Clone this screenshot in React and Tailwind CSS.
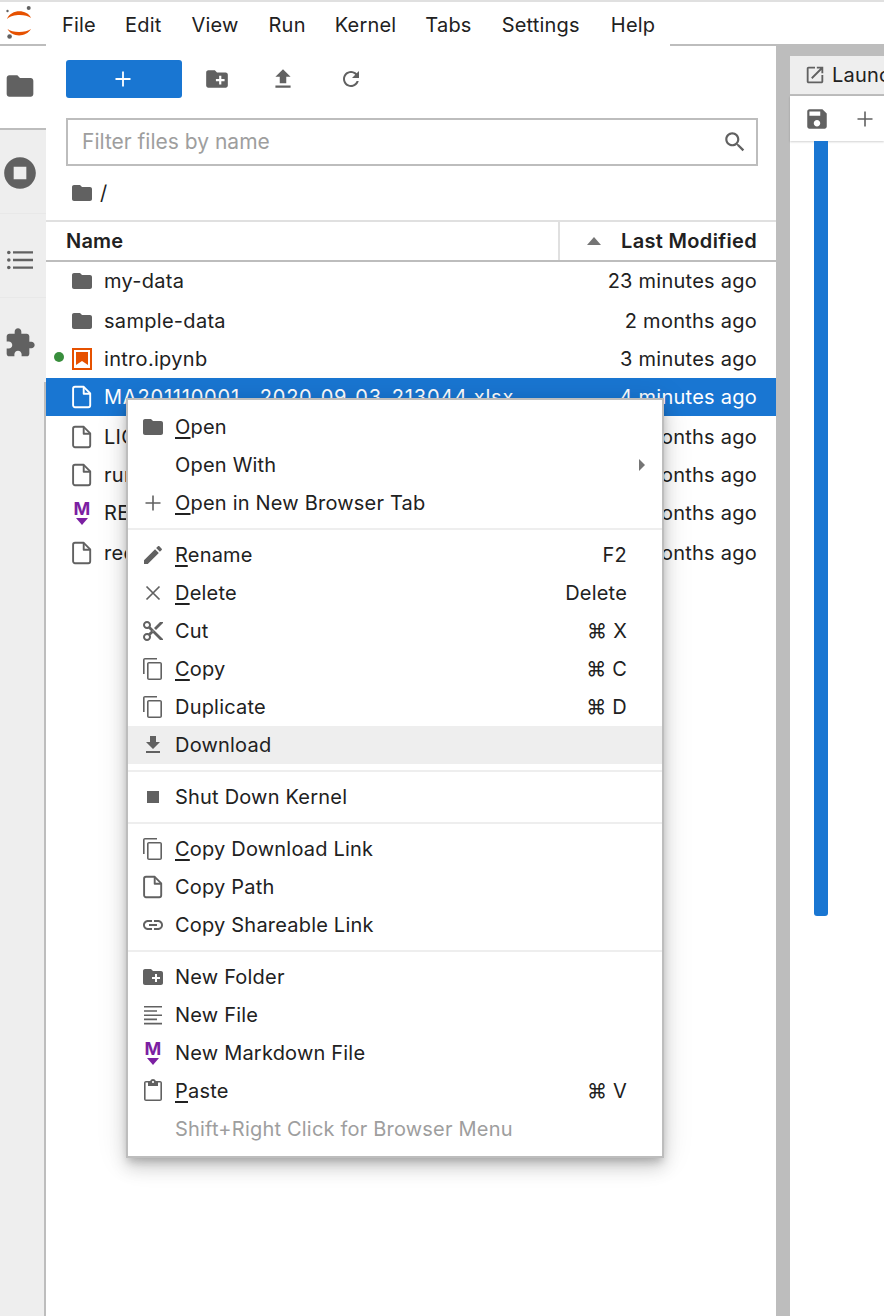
import React from "react";

const P = {
  folder: "M10 4H4c-1.1 0-1.99.9-1.99 2L2 18c0 1.1.9 2 2 2h16c1.1 0 2-.9 2-2V8c0-1.1-.9-2-2-2h-8l-2-2z",
  newFolder: "M20 6h-8l-2-2H4c-1.11 0-1.99.89-1.99 2L2 18c0 1.11.89 2 2 2h16c1.11 0 2-.89 2-2V8c0-1.11-.89-2-2-2zm-1 8h-3v3h-2v-3h-3v-2h3V9h2v3h3v2z",
  upload: "M9 16h6v-6h4l-7-7-7 7h4zm-4 2h14v2H5z",
  refresh: "M17.65 6.35C16.2 4.9 14.21 4 12 4c-4.42 0-7.99 3.58-7.99 8s3.57 8 7.99 8c3.73 0 6.84-2.55 7.73-6h-2.08c-.82 2.33-3.04 4-5.65 4-3.31 0-6-2.69-6-6s2.69-6 6-6c1.66 0 3.14.69 4.22 1.78L13 11h7V4l-2.35 2.35z",
  search: "M15.5 14h-.79l-.28-.27C15.41 12.59 16 11.11 16 9.5 16 5.91 13.09 3 9.5 3S3 5.91 3 9.5 5.91 16 9.5 16c1.61 0 3.09-.59 4.23-1.57l.27.28v.79l5 4.99L20.49 19l-4.99-5zm-6 0C7.01 14 5 11.99 5 9.5S7.01 5 9.5 5 14 7.01 14 9.5 11.99 14 9.5 14z",
  stop: "M12 2C6.48 2 2 6.48 2 12s4.48 10 10 10 10-4.48 10-10S17.52 2 12 2zm4 14H8V8h8v8z",
  ext: "M20.5 11H19V7c0-1.1-.9-2-2-2h-4V3.5C13 2.12 11.88 1 10.5 1S8 2.12 8 3.5V5H4c-1.1 0-1.99.9-1.99 2v3.8H3.5c1.49 0 2.7 1.21 2.7 2.7s-1.21 2.7-2.7 2.7H2V20c0 1.1.9 2 2 2h3.8v-1.5c0-1.49 1.21-2.7 2.7-2.7 1.49 0 2.7 1.21 2.7 2.7V22H17c1.1 0 2-.9 2-2v-4h1.5c1.38 0 2.5-1.12 2.5-2.5S21.88 11 20.5 11z",
  pencil: "M3 17.25V21h3.75L17.81 9.94l-3.75-3.75L3 17.25zM20.71 7.04c.39-.39.39-1.02 0-1.41l-2.34-2.34c-.39-.39-1.02-.39-1.41 0l-1.83 1.83 3.75 3.75 1.83-1.83z",
  cut: "M9.64 7.64c.23-.5.36-1.05.36-1.64 0-2.21-1.79-4-4-4S2 3.79 2 6s1.79 4 4 4c.59 0 1.14-.13 1.64-.36L10 12l-2.36 2.36C7.14 14.13 6.59 14 6 14c-2.21 0-4 1.79-4 4s1.79 4 4 4 4-1.79 4-4c0-.59-.13-1.14-.36-1.64L12 14l7 7h3v-1L9.64 7.64zM6 8c-1.1 0-2-.89-2-2s.9-2 2-2 2 .89 2 2-.9 2-2 2zm0 12c-1.1 0-2-.89-2-2s.9-2 2-2 2 .89 2 2-.9 2-2 2zm6-7.5c-.28 0-.5-.22-.5-.5s.22-.5.5-.5.5.22.5.5-.22.5-.5.5zM19 3l-6 6 2 2 7-7V3z",
  copy: "M16 1H4c-1.1 0-2 .9-2 2v14h1.6V2.6H16V1zm3 4H8c-1.1 0-2 .9-2 2v14c0 1.1.9 2 2 2h11c1.1 0 2-.9 2-2V7c0-1.1-.9-2-2-2zm.4 16.4H7.6V6.6h11.8v14.8z",
  download: "M19 9h-4V3H9v6H5l7 7 7-7zM5 18v2h14v-2H5z",
  link: "M3.9 12c0-1.71 1.39-3.1 3.1-3.1h4V7H7c-2.76 0-5 2.24-5 5s2.24 5 5 5h4v-1.9H7c-1.71 0-3.1-1.39-3.1-3.1zM8 13h8v-2H8v2zm9-6h-4v1.9h4c1.71 0 3.1 1.39 3.1 3.1s-1.39 3.1-3.1 3.1h-4V17h4c2.76 0 5-2.24 5-5s-2.24-5-5-5z",
  paste: "M19 2h-4.18C14.4.84 13.3 0 12 0c-1.3 0-2.4.84-2.82 2H5c-1.1 0-2 .9-2 2v16c0 1.1.9 2 2 2h14c1.1 0 2-.9 2-2V4c0-1.1-.9-2-2-2zm-7 0c.55 0 1 .45 1 1s-.45 1-1 1-1-.45-1-1 .45-1 1-1zm7.4 18.4H4.6V3.6H7V7h10V3.6h2.4v16.8z",
  save: "M17 3H5c-1.11 0-2 .9-2 2v14c0 1.1.89 2 2 2h14c1.1 0 2-.9 2-2V7l-4-4zm-5 16c-1.66 0-3-1.34-3-3s1.34-3 3-3 3 1.34 3 3-1.34 3-3 3zm3-10H5V5h10v4z",
  launch: "M19 19H5V5h7V3H5c-1.11 0-2 .9-2 2v14c0 1.1.89 2 2 2h14c1.1 0 2-.9 2-2v-7h-2v7zM14 3v2h3.59l-9.83 9.83 1.41 1.41L19 6.41V10h2V3h-7z",
};

function Fill({ d, size = 24, cls = "text-[#616161]" }) {
  return (
    <svg viewBox="0 0 24 24" width={size} height={size} className={`block shrink-0 ${cls}`} fill="currentColor">
      <path d={d} />
    </svg>
  );
}

function PlusIcon({ size = 24, w = 1.6, cls = "text-[#616161]" }) {
  return (
    <svg viewBox="0 0 24 24" width={size} height={size} className={`block shrink-0 ${cls}`} fill="none" stroke="currentColor" strokeWidth={w}>
      <path d="M12 4.5v15M4.5 12h15" />
    </svg>
  );
}

function XIcon() {
  return (
    <svg viewBox="0 0 24 24" width="24" height="24" className="block shrink-0 text-[#616161]" fill="none" stroke="currentColor" strokeWidth="1.7">
      <path d="M5.5 5.5l13 13M18.5 5.5l-13 13" />
    </svg>
  );
}

function FileIcon({ cls = "text-[#616161]" }) {
  return (
    <svg viewBox="0 0 24 24" width="24" height="24" className={`block shrink-0 ${cls}`} fill="none" stroke="currentColor" strokeWidth="1.9" strokeLinejoin="round">
      <path d="M5 1.8h8.7l6.5 6.6v11.9a1.9 1.9 0 0 1-1.9 1.9H5a1.9 1.9 0 0 1-1.9-1.9V3.7A1.9 1.9 0 0 1 5 1.8z" />
      <path d="M13.7 1.8v6.9h6.5" />
    </svg>
  );
}

function LinesIcon() {
  return (
    <svg viewBox="0 0 24 24" width="24" height="24" className="block shrink-0 text-[#616161]" fill="currentColor">
      <path d="M3 3h18v1.6H3zM3 7.2h13v1.6H3zM3 11.4h18V13H3zM3 15.6h13v1.6H3zM3 19.8h18v1.6H3z" />
    </svg>
  );
}

function ListIcon() {
  return (
    <svg viewBox="0 0 26 20" width="26" height="20" className="block shrink-0 text-[#616161]" fill="currentColor">
      <circle cx="1.8" cy="2.5" r="1.8" />
      <circle cx="1.8" cy="10" r="1.8" />
      <circle cx="1.8" cy="17.5" r="1.8" />
      <path d="M6 1.2h20v2.4H6zM6 8.8h20v2.4H6zM6 16.4h20v2.4H6z" />
    </svg>
  );
}

function MdIcon() {
  return (
    <svg viewBox="0 0 24 24" width="24" height="24" className="block shrink-0 text-[#7b1fa2]" fill="currentColor">
      <text x="12" y="14" textAnchor="middle" fontSize="18" fontWeight="700" style={{ fontFamily: "Inter, sans-serif", letterSpacing: 0 }}>M</text>
      <path d="M6 17h12l-6 7z" />
    </svg>
  );
}

function StopSq() {
  return (
    <svg viewBox="0 0 24 24" width="24" height="24" className="block shrink-0 text-[#616161]" fill="currentColor">
      <rect x="6" y="6" width="12" height="12" />
    </svg>
  );
}

function NotebookIcon() {
  return (
    <svg viewBox="0 0 20 22" width="20" height="22" className="block shrink-0">
      <rect x="1" y="1" width="18" height="20" fill="#fff" stroke="#e65100" strokeWidth="2" />
      <path d="M4 4h12v13l-6-4-6 4z" fill="#e65100" />
    </svg>
  );
}

function Logo() {
  return (
    <svg viewBox="0 0 38 42" width="38" height="42" className="block">
      <path d="M7 17C11 7 27 7 31 16 26 12 12 12 7 17z" fill="#e65100" />
      <path d="M7.5 27C12 35.5 26 35.5 31 27 26 31 12 31 7.5 27z" fill="#e65100" />
      <circle cx="28.7" cy="6" r="2" fill="#616161" />
      <circle cx="7.5" cy="9" r="1.2" fill="#616161" />
      <circle cx="9.6" cy="34.5" r="2.3" fill="#616161" />
    </svg>
  );
}

const menus = [
  { t: "File" },
  { t: "Edit", c: "ml-[-1px]" },
  { t: "View" },
  { t: "Run" },
  { t: "Kernel", c: "ml-[-1px]" },
  { t: "Tabs", c: "ml-[-1px]" },
  { t: "Settings" },
  { t: "Help", c: "ml-[1px]" },
];

const files = [
  { name: "my-data", time: "23 minutes ago", icon: <Fill d={P.folder} /> },
  { name: "sample-data", time: "2 months ago", icon: <Fill d={P.folder} />, cls: "mt-[2px]" },
  { name: "intro.ipynb", time: "3 minutes ago", icon: <NotebookIcon />, running: true },
  { name: "MA201110001__2020_09_03_213044.xlsx", time: "4 minutes ago", icon: <FileIcon cls="text-white" />, selected: true, nameCls: "tracking-[0.8px]" },
  { name: "LICENSE", time: "2 months ago", icon: <FileIcon />, cls: "mt-[2px]" },
  { name: "runtime.txt", time: "2 months ago", icon: <FileIcon /> },
  { name: "README.md", time: "2 months ago", icon: <MdIcon /> },
  { name: "requirements.txt", time: "2 months ago", icon: <FileIcon />, cls: "mt-[2px]" },
];

const U = ({ children }) => <u className="underline decoration-2 underline-offset-[3px]">{children}</u>;

const groups = [
  [
    { icon: <Fill d={P.folder} />, label: <><U>O</U>pen</> },
    { label: "Open With", sub: true },
    { icon: <PlusIcon />, label: <><U>O</U>pen in New Browser Tab</> },
  ],
  [
    { icon: <Fill d={P.pencil} />, label: <><U>R</U>ename</>, key: "F2" },
    { icon: <XIcon />, label: <><U>D</U>elete</>, key: "Delete" },
    { icon: <Fill d={P.cut} />, label: "Cut", key: "⌘ X" },
    { icon: <Fill d={P.copy} />, label: <><U>C</U>opy</>, key: "⌘ C" },
    { icon: <Fill d={P.copy} />, label: "Duplicate", key: "⌘ D" },
    { icon: <Fill d={P.download} />, label: "Download", active: true },
  ],
  [{ icon: <StopSq />, label: "Shut Down Kernel" }],
  [
    { icon: <Fill d={P.copy} />, label: <><U>C</U>opy Download Link</> },
    { icon: <FileIcon />, label: "Copy Path" },
    { icon: <Fill d={P.link} />, label: "Copy Shareable Link" },
  ],
  [
    { icon: <Fill d={P.newFolder} />, label: "New Folder" },
    { icon: <LinesIcon />, label: "New File" },
    { icon: <MdIcon />, label: "New Markdown File" },
    { icon: <Fill d={P.paste} />, label: <><U>P</U>aste</>, key: "⌘ V" },
    { label: "Shift+Right Click for Browser Menu", disabled: true },
  ],
];

function MenuRow({ item }) {
  return (
    <div className={`flex h-[38px] items-center ${item.active ? "bg-[#eeeeee]" : ""} ${item.disabled ? "text-[#9e9e9e]" : "text-[#212121]"}`}>
      <div className="flex w-[47px] justify-center pl-[2px]">{item.icon}</div>
      <div className="flex-1">{item.label}</div>
      {item.key && <div className="pr-[35px]">{item.key}</div>}
      {item.sub && (
        <svg viewBox="0 0 6 12" width="6" height="12" className="mr-[17px] block text-[#757575]" fill="currentColor">
          <path d="M0 0l6 6-6 6z" />
        </svg>
      )}
    </div>
  );
}

function SideTab({ children, cls = "" }) {
  return <div className={`flex h-[84px] items-center justify-center pr-[6px] ${cls}`}>{children}</div>;
}

export default function App() {
  return (
    <div className="relative flex h-[1316px] w-[884px] flex-col overflow-hidden bg-white text-[20px] leading-[28px] tracking-[0.2px] text-[#212121] [font-family:Inter,'Liberation_Sans',sans-serif]">
      <div className="h-[2px] bg-[#e0e0e0]" />

      <div className="flex h-[44px]">
        <div className="w-[46px] border-b-2 border-[#bdbdbd]">
          <Logo />
        </div>
        <div className="flex w-[624px] items-center gap-[30px] pt-[2px] pl-[16px]">
          {menus.map((m) => (
            <span key={m.t} className={m.c || ""}>{m.t}</span>
          ))}
        </div>
        <div className="flex-1 border-b-2 border-[#bdbdbd]" />
      </div>

      <div className="flex min-h-0 flex-1">
        <div className="flex w-[46px] flex-col bg-[#eeeeee]">
          <SideTab cls="border-b-2 border-[#bdbdbd] bg-white pb-[2px]">
            <Fill d={P.folder} size={32} />
          </SideTab>
          <SideTab cls="border-b border-[#e8e8e8] pt-[2px]">
            <Fill d={P.stop} size={38} />
          </SideTab>
          <SideTab cls="border-b border-[#e8e8e8] pt-[8px]">
            <ListIcon />
          </SideTab>
          <SideTab cls="pt-[6px]">
            <Fill d={P.ext} size={32} />
          </SideTab>
          <div className="flex-1 border-r-2 border-[#bdbdbd]" />
        </div>

        <div className="flex w-[730px] flex-col">
          <div className="flex h-[72px] items-center pl-[20px] pb-[6px]">
            <div className="flex h-[38px] w-[116px] items-center justify-center rounded-[3px] bg-[#1976d2] pr-[2px]">
              <PlusIcon cls="text-white" w={1.8} />
            </div>
            <div className="ml-[22px]">
              <Fill d={P.newFolder} size={26} />
            </div>
            <div className="ml-[40px]">
              <Fill d={P.upload} size={26} />
            </div>
            <div className="ml-[43px]">
              <Fill d={P.refresh} size={24} />
            </div>
          </div>

          <div className="mx-[20px] mr-[18px] flex h-[48px] items-center border-2 border-[#bdbdbd] pl-[14px] pr-[8px]">
            <span className="flex-1 text-[21px] tracking-normal text-[#9e9e9e]">Filter files by name</span>
            <Fill d={P.search} size={26} />
          </div>

          <div className="flex h-[54px] items-center pl-[24px]">
            <Fill d={P.folder} size={24} />
            <span className="ml-[6px]">/</span>
          </div>

          <div className="flex h-[42px] border-y-2 border-t-[#e0e0e0] border-b-[#bdbdbd] font-semibold">
            <div className="flex w-[514px] items-center border-r-2 border-[#e0e0e0] pl-[20px]">Name</div>
            <div className="flex flex-1 items-center justify-end pr-[19px]">
              <svg viewBox="0 0 14 8" width="14" height="8" className="mr-[20px] block text-[#757575]" fill="currentColor">
                <path d="M7 0l7 8H0z" />
              </svg>
              <span className="tracking-[0.33px]">Last Modified</span>
            </div>
          </div>

          {files.map((f) => (
            <div
              key={f.name}
              className={`relative flex h-[38px] items-center pl-[24px] pr-[19px] ${f.cls || ""} ${f.selected ? "bg-[#1976d2] text-white" : ""}`}
            >
              {f.running && <span className="absolute left-[8px] top-[12px] h-[10px] w-[10px] rounded-full bg-[#388e3c]" />}
              <div className="flex w-[24px] justify-center">{f.icon}</div>
              <span className={`ml-[10px] flex-1 whitespace-nowrap ${f.nameCls || "tracking-[0.3px]"}`}>{f.name}</span>
              <span className="whitespace-nowrap tracking-[0.25px]">{f.time}</span>
            </div>
          ))}
        </div>

        <div className="w-[14px] bg-[#bdbdbd]" />

        <div className="flex min-w-0 flex-1 flex-col">
          <div className="h-[10px] bg-[#bdbdbd]" />
          <div className="flex h-[40px] items-center gap-[6px] overflow-hidden border-b-2 border-[#bdbdbd] bg-[#eeeeee] pl-[14px]">
            <Fill d={P.launch} size={22} />
            <span className="whitespace-nowrap">Launcher</span>
          </div>
          <div className="flex h-[45px] items-center gap-[23px] pl-[14px] shadow-[0_1px_2px_rgba(0,0,0,0.18)]">
            <Fill d={P.save} size={26} />
            <PlusIcon />
          </div>
          <div className="ml-[24px] h-[775px] w-[14px] rounded-b-[3px] bg-[#1976d2]" />
        </div>
      </div>

      <div className="absolute left-[126px] top-[398px] w-[538px] border-2 border-[#bdbdbd] bg-white py-[8px] shadow-[0_5px_8px_-2px_rgba(0,0,0,0.2),0_10px_16px_0_rgba(0,0,0,0.14),0_2px_29px_0_rgba(0,0,0,0.12)]">
        {groups.map((g, i) => (
          <div key={i}>
            {i > 0 && <div className="my-[6px] h-[2px] bg-[#eeeeee]" />}
            {g.map((item, j) => (
              <MenuRow key={j} item={item} />
            ))}
          </div>
        ))}
      </div>
    </div>
  );
}
